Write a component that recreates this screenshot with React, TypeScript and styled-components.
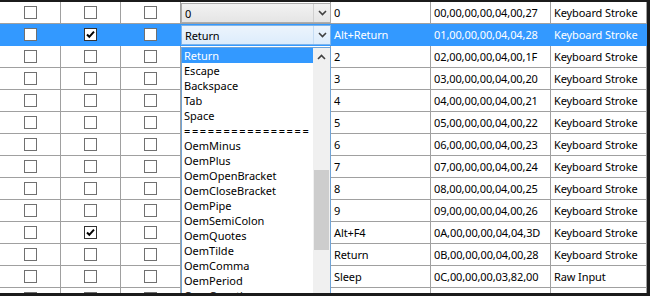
import styled, { createGlobalStyle } from "styled-components";

const GlobalStyle = createGlobalStyle`
  body {
    margin: 0;
    background: #fff;
    font-family: "Noto Sans", "Open Sans", sans-serif;
  }
`;

type RowData = {
  checks: [boolean, boolean, boolean];
  combo?: string;
  key: string;
  code: string;
  kind: string;
};

const rows: RowData[] = [
  { checks: [false, false, false], combo: "0", key: "0", code: "00,00,00,00,04,00,27", kind: "Keyboard Stroke" },
  { checks: [false, true, false], combo: "Return", key: "Alt+Return", code: "01,00,00,00,04,04,28", kind: "Keyboard Stroke" },
  { checks: [false, false, false], key: "2", code: "02,00,00,00,04,00,1F", kind: "Keyboard Stroke" },
  { checks: [false, false, false], key: "3", code: "03,00,00,00,04,00,20", kind: "Keyboard Stroke" },
  { checks: [false, false, false], key: "4", code: "04,00,00,00,04,00,21", kind: "Keyboard Stroke" },
  { checks: [false, false, false], key: "5", code: "05,00,00,00,04,00,22", kind: "Keyboard Stroke" },
  { checks: [false, false, false], key: "6", code: "06,00,00,00,04,00,23", kind: "Keyboard Stroke" },
  { checks: [false, false, false], key: "7", code: "07,00,00,00,04,00,24", kind: "Keyboard Stroke" },
  { checks: [false, false, false], key: "8", code: "08,00,00,00,04,00,25", kind: "Keyboard Stroke" },
  { checks: [false, false, false], key: "9", code: "09,00,00,00,04,00,26", kind: "Keyboard Stroke" },
  { checks: [false, true, false], key: "Alt+F4", code: "0A,00,00,00,04,04,3D", kind: "Keyboard Stroke" },
  { checks: [false, false, false], key: "Return", code: "0B,00,00,00,04,00,28", kind: "Keyboard Stroke" },
  { checks: [false, false, false], key: "Sleep", code: "0C,00,00,00,03,82,00", kind: "Raw Input" },
  { checks: [false, false, false], key: "", code: "", kind: "" },
];

const options = [
  "Return",
  "Escape",
  "Backspace",
  "Tab",
  "Space",
  "================",
  "OemMinus",
  "OemPlus",
  "OemOpenBracket",
  "OemCloseBracket",
  "OemPipe",
  "OemSemiColon",
  "OemQuotes",
  "OemTilde",
  "OemComma",
  "OemPeriod",
  "OemQuestion",
];

const Frame = styled.div`
  position: relative;
  width: 650px;
  height: 296px;
  box-sizing: border-box;
  border-top: 2px solid #1b1b1b;
  border-right: 3px solid #1b1b1b;
  border-bottom: 3px solid #1b1b1b;
  overflow: hidden;
`;

const Row = styled.div<{ $selected?: boolean }>`
  display: grid;
  grid-template-columns: 61px 60px 60px 150px 100px 120px 1fr;
  height: 22px;
  background: ${(p) => (p.$selected ? "#3399ff" : "#fff")};
  color: ${(p) => (p.$selected ? "#fff" : "#000")};
`;

const Cell = styled.div<{ $selected?: boolean; $center?: boolean }>`
  box-sizing: border-box;
  display: flex;
  align-items: center;
  justify-content: ${(p) => (p.$center ? "center" : "flex-start")};
  padding: ${(p) => (p.$center ? "0" : "0 3px")};
  border-right: 1px solid ${(p) => (p.$selected ? "#3399ff" : "#a0a0a0")};
  border-bottom: 1px solid ${(p) => (p.$selected ? "#3399ff" : "#a0a0a0")};
  font-size: 11px;
  letter-spacing: -0.1px;
  white-space: nowrap;
  overflow: hidden;
`;

const ComboCell = styled(Cell)`
  padding: 0;
  align-items: stretch;
  padding-top: 1px;
  overflow: visible;
`;

const Box = styled.div<{ $checked?: boolean }>`
  width: 13px;
  height: 13px;
  box-sizing: border-box;
  border: 1px solid ${(p) => (p.$checked ? "#333" : "#707070")};
  background: #fff;
  display: flex;
  align-items: center;
  justify-content: center;
`;

const Combo = styled.div<{ $focused?: boolean }>`
  flex: 1;
  margin-right: -1px;
  display: flex;
  box-sizing: border-box;
  height: 20px;
  border: 1px solid ${(p) => (p.$focused ? "#7eb4ea" : "#acacac")};
  background: ${(p) =>
    p.$focused
      ? "linear-gradient(#ecf4fc, #dcecfc)"
      : "linear-gradient(#f2f2f2, #e5e5e5)"};
  color: #000;
`;

const ComboText = styled.div`
  flex: 1;
  display: flex;
  align-items: center;
  padding-left: 3px;
  font-size: 11px;
`;

const ComboArrow = styled.div<{ $focused?: boolean }>`
  width: 16px;
  display: flex;
  align-items: center;
  justify-content: center;
  border-left: 1px solid ${(p) => (p.$focused ? "#c5dcf3" : "#d0d0d0")};
`;

const DropList = styled.div`
  position: absolute;
  left: 181px;
  top: 45px;
  width: 150px;
  height: 262px;
  box-sizing: border-box;
  border: 1px solid #6fa3d6;
  background: #fff;
  display: flex;
`;

const Items = styled.div`
  flex: 1;
  display: flex;
  flex-direction: column;
`;

const Item = styled.div<{ $active?: boolean; $rule?: boolean }>`
  height: 15px;
  line-height: 15px;
  padding-left: 2px;
  font-size: 11px;
  letter-spacing: ${(p) => (p.$rule ? "1.6px" : "0")};
  white-space: nowrap;
  overflow: hidden;
  background: ${(p) => (p.$active ? "#3399ff" : "transparent")};
  color: ${(p) => (p.$active ? "#fff" : "#000")};
`;

const ScrollBar = styled.div`
  width: 17px;
  background: #f0f0f0;
  display: flex;
  flex-direction: column;
  align-items: center;
`;

const ScrollButton = styled.div`
  height: 17px;
  width: 100%;
  display: flex;
  align-items: center;
  justify-content: center;
`;

const Thumb = styled.div`
  width: 15px;
  height: 80px;
  background: #cdcdcd;
`;

const Check = () => (
  <svg width="11" height="11" viewBox="0 0 11 11">
    <path d="M2 5.5 L4.3 7.8 L9 2.6" fill="none" stroke="#000" strokeWidth="2" />
  </svg>
);

const Chevron = ({ up }: { up?: boolean }) => (
  <svg width="9" height="6" viewBox="0 0 9 6">
    <path
      d={up ? "M1 5 L4.5 1.5 L8 5" : "M1 1 L4.5 4.5 L8 1"}
      fill="none"
      stroke="#404040"
      strokeWidth="1.6"
    />
  </svg>
);

export default function App() {
  const thumbTop = 105;
  return (
    <>
      <GlobalStyle />
      <Frame>
        {rows.map((r, i) => {
          const sel = i === 1;
          return (
            <Row key={i} $selected={sel}>
              {r.checks.map((c, j) => (
                <Cell key={j} $center $selected={sel}>
                  <Box $checked={c}>{c && <Check />}</Box>
                </Cell>
              ))}
              <ComboCell $selected={sel}>
                {r.combo !== undefined && (
                  <Combo $focused={sel}>
                    <ComboText>{r.combo}</ComboText>
                    <ComboArrow $focused={sel}>
                      <Chevron />
                    </ComboArrow>
                  </Combo>
                )}
              </ComboCell>
              <Cell $selected={sel}>{r.key}</Cell>
              <Cell $selected={sel}>{r.code}</Cell>
              <Cell $selected={sel}>{r.kind}</Cell>
            </Row>
          );
        })}
        <DropList>
          <Items>
            {options.map((o, i) => (
              <Item key={o} $active={i === 0} $rule={o.startsWith("=")}>
                {o}
              </Item>
            ))}
          </Items>
          <ScrollBar>
            <ScrollButton>
              <Chevron up />
            </ScrollButton>
            <Thumb style={{ marginTop: thumbTop }} />
          </ScrollBar>
        </DropList>
      </Frame>
    </>
  );
}
